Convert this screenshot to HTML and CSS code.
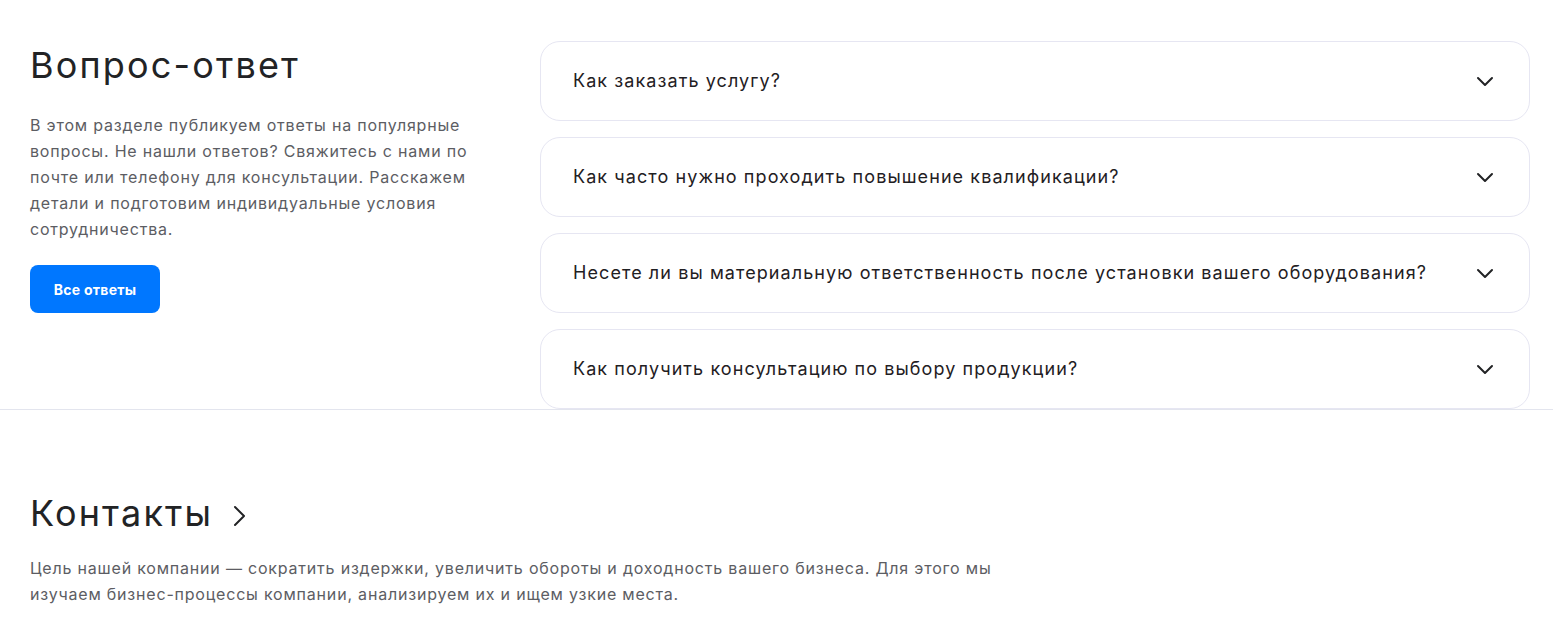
FILE: index.html
```html
<!DOCTYPE html>
<html lang="ru">

<head>
    <meta charset="UTF-8">
    <meta name="viewport" content="width=device-width, initial-scale=1.0">
    <title>Вопрос-ответ</title>
    <link rel="stylesheet" href="styles.css">
</head>

<body>

    <!-- Блок вопросов и ответов -->
    <section class="faq">
        <div class="faq-intro">
            <h2 class="section-title">Вопрос-ответ</h2>
            <p class="section-text">В этом разделе публикуем ответы на популярные вопросы. Не нашли ответов? Свяжитесь с нами по почте или телефону для консультации. Расскажем детали и подготовим индивидуальные условия сотрудничества.</p>
            <a href="#" class="btn-primary">Все ответы</a>
        </div>

        <div class="faq-list">
            <div class="faq-item">
                <span>Как заказать услугу?</span>
                <svg class="faq-arrow" width="24" height="24" viewBox="0 0 24 24"><path d="M5 9l7 7 7-7" fill="none" stroke="currentColor" stroke-width="2" stroke-linecap="round" stroke-linejoin="round"/></svg>
            </div>
            <div class="faq-item">
                <span>Как часто нужно проходить повышение квалификации?</span>
                <svg class="faq-arrow" width="24" height="24" viewBox="0 0 24 24"><path d="M5 9l7 7 7-7" fill="none" stroke="currentColor" stroke-width="2" stroke-linecap="round" stroke-linejoin="round"/></svg>
            </div>
            <div class="faq-item">
                <span>Несете ли вы материальную ответственность после установки вашего оборудования?</span>
                <svg class="faq-arrow" width="24" height="24" viewBox="0 0 24 24"><path d="M5 9l7 7 7-7" fill="none" stroke="currentColor" stroke-width="2" stroke-linecap="round" stroke-linejoin="round"/></svg>
            </div>
            <div class="faq-item">
                <span>Как получить консультацию по выбору продукции?</span>
                <svg class="faq-arrow" width="24" height="24" viewBox="0 0 24 24"><path d="M5 9l7 7 7-7" fill="none" stroke="currentColor" stroke-width="2" stroke-linecap="round" stroke-linejoin="round"/></svg>
            </div>
        </div>
    </section>

    <!-- Контакты -->
    <section class="contacts">
        <h2 class="section-title">
            Контакты
            <svg class="title-arrow" width="28" height="28" viewBox="0 0 28 28"><path d="M10 5l9 9-9 9" fill="none" stroke="currentColor" stroke-width="2" stroke-linecap="round" stroke-linejoin="round"/></svg>
        </h2>
        <p class="section-text contacts-text">Цель нашей компании — сократить издержки, увеличить обороты и доходность вашего бизнеса. Для этого мы изучаем бизнес-процессы компании, анализируем их и ищем узкие места.</p>
    </section>

</body>

</html>
```

FILE: styles.css
```css
/* Reset */
* {
    margin: 0;
    padding: 0;
    box-sizing: border-box;
}

body {
    font-family: "Inter", "Noto Sans", sans-serif;
    color: #222325;
    background-color: #fff;
    letter-spacing: 0.05em;
}

/* Заголовки секций */
.section-title {
    font-size: 36px;
    font-weight: 400;
    line-height: 1.2;
    letter-spacing: 0.06em;
    display: flex;
    align-items: center;
    gap: 12px;
}

.section-text {
    font-size: 16px;
    line-height: 26px;
    color: #5c5d63;
}

/* Вопрос-ответ */
.faq {
    display: grid;
    grid-template-columns: 510px 990px;
    padding: 41px 23px 0 30px;
    border-bottom: 1px solid #e3e5ee;
}

.faq-intro {
    padding-top: 3px;
    padding-right: 50px;
}

.faq-intro .section-text {
    margin-top: 25px;
}

.btn-primary {
    display: inline-flex;
    align-items: center;
    justify-content: center;
    width: 130px;
    height: 48px;
    margin-top: 23px;
    background-color: #0077ff;
    color: #fff;
    font-size: 14px;
    font-weight: 700;
    letter-spacing: 0.02em;
    text-decoration: none;
    border-radius: 8px;
}

.faq-list {
    display: flex;
    flex-direction: column;
    gap: 16px;
}

.faq-item {
    height: 80px;
    display: flex;
    align-items: center;
    justify-content: space-between;
    padding: 0 32px 1px;
    border: 1px solid #e6e6f2;
    border-radius: 20px;
    font-size: 18px;
    letter-spacing: 0.06em;
    color: #1f2023;
    background-color: #fff;
}

.faq-arrow {
    flex-shrink: 0;
    color: #222325;
}

/* Контакты */
.contacts {
    padding: 82px 30px 40px;
}

.title-arrow {
    color: #222325;
    margin-top: 4px;
}

.contacts-text {
    max-width: 1000px;
    margin-top: 20px;
}
```
